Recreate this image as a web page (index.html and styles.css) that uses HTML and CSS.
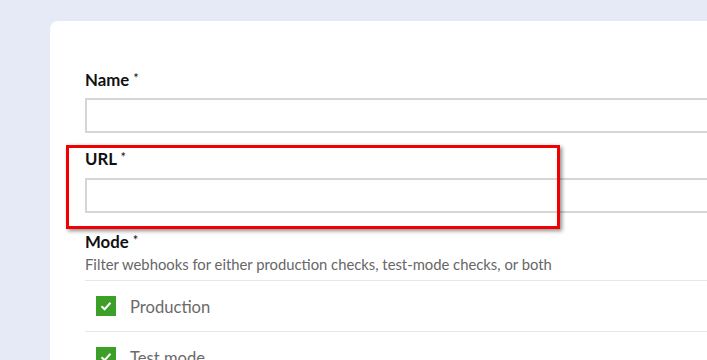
FILE: index.html
```html
<!DOCTYPE html>
<html lang="en">
<head>
    <meta charset="UTF-8">
    <meta name="viewport" content="width=device-width, initial-scale=1.0">
    <title>New Webhook</title>
    <link rel="stylesheet" href="styles.css">
</head>
<body>
    <div class="card">
        <form class="webhook-form">
            <!-- NAME -->
            <div class="field field-name">
                <label for="name">Name <span class="req">*</span></label>
                <input type="text" id="name" name="name">
            </div>
            <!-- URL -->
            <div class="field field-url">
                <label for="url">URL <span class="req">*</span></label>
                <input type="text" id="url" name="url">
            </div>
            <!-- MODE -->
            <div class="field field-mode">
                <label>Mode <span class="req">*</span></label>
                <p class="hint">Filter webhooks for either production checks, test-mode checks, or both</p>
                <ul class="check-list">
                    <li class="check-row">
                        <span class="check-box">
                            <svg width="14" height="14" viewBox="0 0 14 14"><polyline points="2.5,7.2 5.6,10.2 11.5,3.8" fill="none" stroke="#fff" stroke-width="2"/></svg>
                        </span>
                        <span class="check-label">Production</span>
                    </li>
                    <li class="check-row">
                        <span class="check-box">
                            <svg width="14" height="14" viewBox="0 0 14 14"><polyline points="2.5,7.2 5.6,10.2 11.5,3.8" fill="none" stroke="#fff" stroke-width="2"/></svg>
                        </span>
                        <span class="check-label">Test mode</span>
                    </li>
                </ul>
            </div>
        </form>
    </div>
    <!-- highlight annotation -->
    <div class="highlight"></div>
</body>
</html>
```

FILE: styles.css
```css
html, body {
    margin: 0;
    padding: 0;
    overflow: hidden;
}
body {
    font-family: Lato, 'Noto Sans', sans-serif;
    background-color: #e6e9f6;
    height: 360px;
    padding: 21px 0 0 50px;
    box-sizing: border-box;
}
.card {
    background: #ffffff;
    border-radius: 8px 0 0 0;
    height: 339px;
    overflow: hidden;
    padding: 48px 0 0 35px;
    box-sizing: border-box;
}
.field label {
    display: block;
    font-size: 16.8px;
    font-weight: bold;
    line-height: 20px;
    color: #111;
    padding-top: 1px;
    margin-bottom: 8px;
}
.req {
    font-size: 13px;
    font-weight: normal;
    vertical-align: top;
    line-height: 16px;
}
.field input[type="text"] {
    display: block;
    width: 100%;
    height: 35px;
    box-sizing: border-box;
    border: 2px solid #d6d6d6;
    border-right: none;
    background: #fff;
    margin: 0;
}
.field-name {
    margin-bottom: 15px;
}
.field-url label {
    margin-bottom: 9px;
}
.field-url {
    margin-bottom: 18px;
}
.field-mode label {
    margin-bottom: 2px;
}
.hint {
    margin: 0 0 6px;
    font-size: 14.8px;
    line-height: 20px;
    color: #666;
    white-space: nowrap;
}
.check-list {
    list-style: none;
    margin: 0;
    padding: 0;
}
.check-row {
    display: flex;
    align-items: center;
    height: 50px;
    border-top: 1px solid #e8e8e8;
    padding-left: 11px;
}
.check-box {
    width: 20px;
    height: 20px;
    background-color: #3b9f28;
    display: flex;
    align-items: center;
    justify-content: center;
    margin-right: 14px;
}
.check-label {
    font-size: 16.6px;
    color: #6a6a6a;
    padding-top: 2px;
}
.highlight {
    position: absolute;
    left: 66px;
    top: 145px;
    width: 494px;
    height: 84px;
    box-sizing: border-box;
    border: 3px solid #f00000;
    box-shadow: 2px 2px 4px rgba(0, 0, 0, 0.45);
}
```
